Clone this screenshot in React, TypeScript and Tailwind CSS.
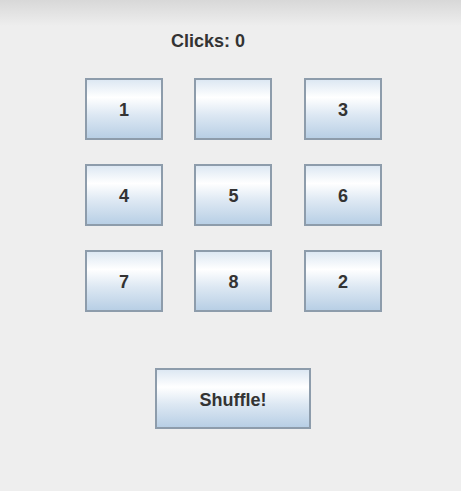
const tiles = ['1', '', '3', '4', '5', '6', '7', '8', '2'];

const btn =
  'flex items-center justify-center border-2 border-[#8d9cab] text-[18px] font-bold text-[#333333] bg-[linear-gradient(to_bottom,#dde8f3_0%,#ffffff_30%,#dde8f3_60%,#b8cfe5_100%)]';

export default function App() {
  return (
    <div
      className="h-[491px] w-[461px] bg-[linear-gradient(to_bottom,#d8d8d8_0px,#eeeeee_26px,#eeeeee_100%)]"
      style={{ fontFamily: '"Liberation Sans", Arial, sans-serif' }}
    >
      <div className="pl-[171px] pt-[32px] text-[18px] font-bold leading-[18px] text-[#333333]">
        Clicks: 0
      </div>

      <div className="ml-[84.5px] mt-[28px] grid w-max grid-cols-[78px_78px_78px] gap-x-[31.5px] gap-y-[24px]">
        {tiles.map((t, i) => (
          <button key={i} className={`${btn} h-[62px] w-[78px] pl-[1px] pt-[3px]`}>
            {t}
          </button>
        ))}
      </div>

      <div className="ml-[155px] mt-[56px]">
        <button className={`${btn} h-[61px] w-[156px] pt-[3px]`}>Shuffle!</button>
      </div>
    </div>
  );
}
